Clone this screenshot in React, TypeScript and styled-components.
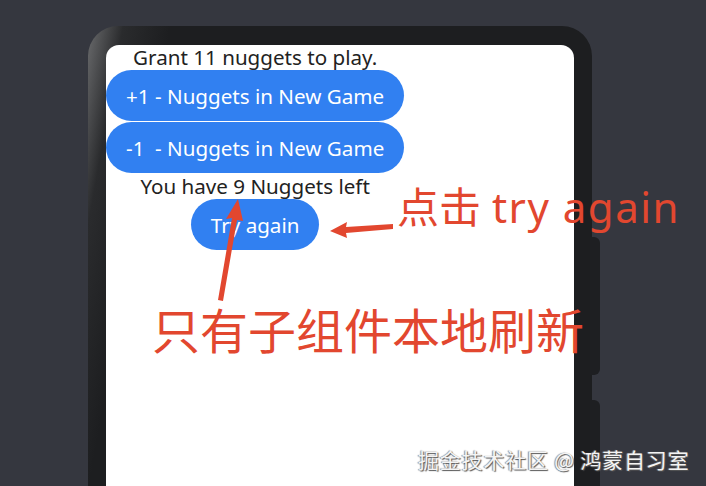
import styled, { createGlobalStyle } from 'styled-components';

const GlobalStyle = createGlobalStyle`
  html, body {
    margin: 0;
    padding: 0;
    background: #35373f;
    overflow: hidden;
  }
  body {
    font-family: "Noto Sans", Roboto, sans-serif;
  }
`;

const Stage = styled.div`
  position: relative;
  width: 706px;
  height: 486px;
  overflow: hidden;
  padding: 26px 0 0 88px;
  box-sizing: border-box;
`;

const Phone = styled.div`
  position: relative;
  width: 504px;
  height: 480px;
  box-sizing: border-box;
  padding: 19px 18px 0 18px;
  border-radius: 30px 30px 0 0;
  background: linear-gradient(100deg, #6a6b6d 0%, #2a2b2d 6%, #1d1e20 14%, #1d1e20 100%);
`;

const SideKey = styled.div<{ $top: number; $height: number }>`
  position: absolute;
  right: -8px;
  top: ${(p) => p.$top}px;
  width: 10px;
  height: ${(p) => p.$height}px;
  border-radius: 0 6px 6px 0;
  background: #1e1f22;
`;

const Screen = styled.div`
  height: 100%;
  background: #ffffff;
  border-radius: 13px 13px 0 0;
`;

const Column = styled.div`
  display: inline-flex;
  flex-direction: column;
  align-items: center;
`;

const Label = styled.div`
  height: 25px;
  line-height: 24px;
  font-size: 20.6px;
  color: #222222;
  white-space: pre;
`;

const Pill = styled.div`
  height: 51px;
  padding: 0 20px;
  border-radius: 26px;
  background: #3180f1;
  color: #ffffff;
  font-size: 20.6px;
  display: flex;
  align-items: center;
  justify-content: center;
  white-space: pre;
  margin-bottom: 1px;
`;

const Note = styled.div<{ $x: number; $y: number; $size: number }>`
  position: absolute;
  left: ${(p) => p.$x}px;
  top: ${(p) => p.$y}px;
  font-size: ${(p) => p.$size}px;
  line-height: 1;
  color: #e2472f;
  font-family: "Noto Sans", "Noto Sans CJK SC", sans-serif;
  white-space: nowrap;
`;

const Latin = styled.span`
  letter-spacing: 1.5px;
`;

const Arrows = styled.svg`
  position: absolute;
  left: 0;
  top: 0;
  pointer-events: none;
`;

const Watermark = styled.div`
  position: absolute;
  left: 418px;
  top: 444px;
  font-size: 21px;
  color: #f4f4f4;
  font-family: "Noto Sans CJK SC", sans-serif;
  text-shadow: 1px 1px 1px #555, -1px 0 1px #888;
  letter-spacing: 0.8px;
`;

export default function App() {
  return (
    <>
      <GlobalStyle />
      <Stage>
        <Phone>
          <SideKey $top={211} $height={138} />
          <SideKey $top={374} $height={110} />
          <Screen>
            <Column>
              <Label>Grant 11 nuggets to play.</Label>
              <Pill>+1 - Nuggets in New Game</Pill>
              <Pill>-1  - Nuggets in New Game</Pill>
              <Label>You have 9 Nuggets left</Label>
              <Pill>Try again</Pill>
            </Column>
          </Screen>
        </Phone>
        <Note $x={397} $y={186} $size={42}>
          点击 <Latin>try again</Latin>
        </Note>
        <Note $x={152} $y={307} $size={48}>只有子组件本地刷新</Note>
        <Arrows width="706" height="486" viewBox="0 0 706 486">
          <polygon points="393,224 346,227 347,222 330,231 347,238 346,233 393,229" fill="#e2472f" />
          <polygon points="218,300 232,218 226,219 238,199 243,221 237,220 223,301" fill="#e2472f" />
        </Arrows>
        <Watermark>掘金技术社区 @ 鸿蒙自习室</Watermark>
      </Stage>
    </>
  );
}
